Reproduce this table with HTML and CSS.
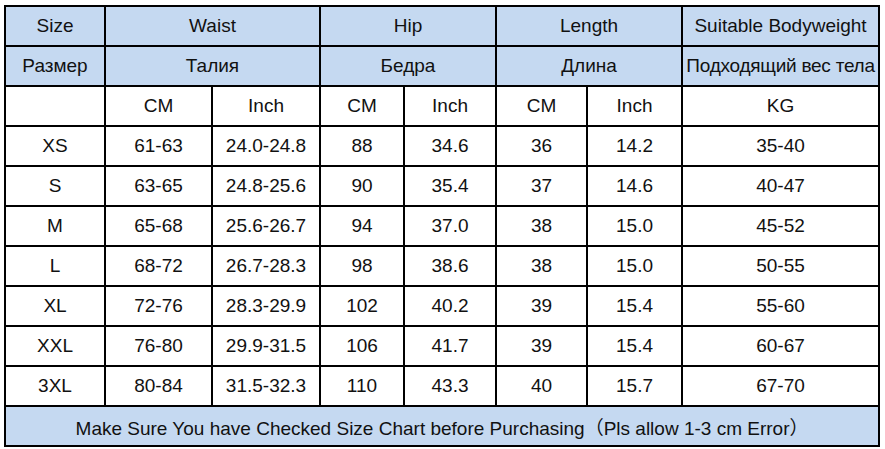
FILE: index.html
```html
<!DOCTYPE html>
<html>
<head>
<meta charset="utf-8">
<link rel="stylesheet" href="styles.css">
</head>
<body>
<div class="page">
<table class="chart">
  <colgroup>
    <col class="c1"><col class="c2"><col class="c3"><col class="c4"><col class="c5"><col class="c6"><col class="c7"><col class="c8">
  </colgroup>
  <tr class="head"><td>Size</td><td colspan="2">Waist</td><td colspan="2">Hip</td><td colspan="2">Length</td><td>Suitable Bodyweight</td></tr>
  <tr class="head"><td>Размер</td><td colspan="2">Талия</td><td colspan="2">Бедра</td><td colspan="2">Длина</td><td class="tight">Подходящий вес тела</td></tr>
  <tr><td></td><td>CM</td><td>Inch</td><td>CM</td><td>Inch</td><td>CM</td><td>Inch</td><td>KG</td></tr>
  <tr><td>XS</td><td>61-63</td><td>24.0-24.8</td><td>88</td><td>34.6</td><td>36</td><td>14.2</td><td>35-40</td></tr>
  <tr><td>S</td><td>63-65</td><td>24.8-25.6</td><td>90</td><td>35.4</td><td>37</td><td>14.6</td><td>40-47</td></tr>
  <tr><td>M</td><td>65-68</td><td>25.6-26.7</td><td>94</td><td>37.0</td><td>38</td><td>15.0</td><td>45-52</td></tr>
  <tr><td>L</td><td>68-72</td><td>26.7-28.3</td><td>98</td><td>38.6</td><td>38</td><td>15.0</td><td>50-55</td></tr>
  <tr><td>XL</td><td>72-76</td><td>28.3-29.9</td><td>102</td><td>40.2</td><td>39</td><td>15.4</td><td>55-60</td></tr>
  <tr><td>XXL</td><td>76-80</td><td>29.9-31.5</td><td>106</td><td>41.7</td><td>39</td><td>15.4</td><td>60-67</td></tr>
  <tr><td>3XL</td><td>80-84</td><td>31.5-32.3</td><td>110</td><td>43.3</td><td>40</td><td>15.7</td><td>67-70</td></tr>
  <tr class="foot"><td colspan="8">Make Sure You have Checked Size Chart before Purchasing（Pls allow 1-3 cm Error）</td></tr>
</table>
</div>
</body>
</html>
```
FILE: styles.css
```css
html, body {
  margin: 0;
  padding: 0;
  background: #ffffff;
}
.page {
  padding: 5px 0 0 4px;
}
.chart {
  border-collapse: collapse;
  table-layout: fixed;
  width: 876px;
  font-family: "Liberation Sans", Arial, "Noto Sans CJK SC", sans-serif;
  font-size: 19px;
  color: #111;
}
.c1 { width: 100px; }
.c2 { width: 107px; }
.c3 { width: 108px; }
.c4 { width: 84px; }
.c5 { width: 92px; }
.c6 { width: 91px; }
.c7 { width: 95px; }
.c8 { width: 197px; }
.chart td {
  border: 2px solid #000;
  height: 38px;
  padding: 0;
  text-align: center;
  vertical-align: middle;
  white-space: nowrap;
  overflow: hidden;
}
.head td, .foot td {
  background: #c5d9f1;
}
.tight {
  letter-spacing: -0.25px;
}
```
